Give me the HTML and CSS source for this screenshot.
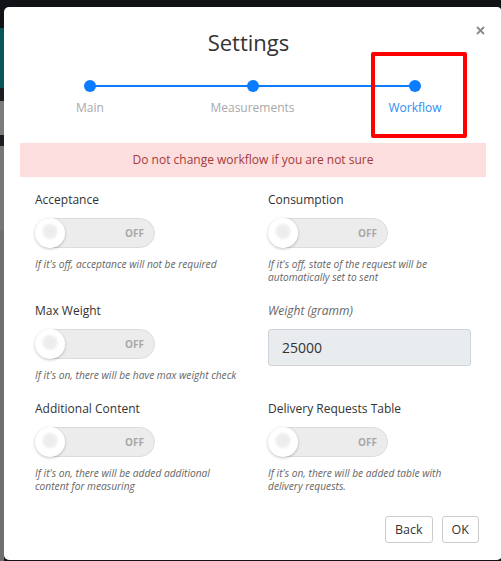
FILE: index.html
```html
<!DOCTYPE html>
<html>
<head>
<meta charset="utf-8">
<link rel="stylesheet" href="styles.css">
</head>
<body>
<div class="modal">
  <div class="close"><svg width="9" height="9" viewBox="0 0 9 9"><path d="M1 1L8 8M8 1L1 8" stroke="#8a8a8a" stroke-width="1.8"/></svg></div>
  <h1 class="title">Settings</h1>
  <div class="stepper">
    <div class="line"></div>
    <div class="step"><span class="dot"></span><span class="step-label">Main</span></div>
    <div class="step"><span class="dot"></span><span class="step-label">Measurements</span></div>
    <div class="step active"><span class="dot"></span><span class="step-label">Workflow</span></div>
    <div class="highlight"></div>
  </div>
  <div class="alert">Do not change workflow if you are not sure</div>
  <div class="form">
    <div class="group">
      <div class="label">Acceptance</div>
      <div class="toggle"><span class="knob"></span><span class="off">OFF</span></div>
      <div class="help">If it's off, acceptance will not be required</div>
    </div>
    <div class="group">
      <div class="label">Consumption</div>
      <div class="toggle"><span class="knob"></span><span class="off">OFF</span></div>
      <div class="help">If it's off, state of the request will be automatically set to sent</div>
    </div>
    <div class="group">
      <div class="label">Max Weight</div>
      <div class="toggle"><span class="knob"></span><span class="off">OFF</span></div>
      <div class="help">If it's on, there will be have max weight check</div>
    </div>
    <div class="group">
      <div class="label italic">Weight (gramm)</div>
      <div class="input">25000</div>
    </div>
    <div class="group">
      <div class="label">Additional Content</div>
      <div class="toggle"><span class="knob"></span><span class="off">OFF</span></div>
      <div class="help">If it's on, there will be added additional content for measuring</div>
    </div>
    <div class="group">
      <div class="label">Delivery Requests Table</div>
      <div class="toggle"><span class="knob"></span><span class="off">OFF</span></div>
      <div class="help">If it's on, there will be added table with delivery requests.</div>
    </div>
  </div>
  <div class="footer">
    <button class="btn">Back</button>
    <button class="btn">OK</button>
  </div>
</div>
</body>
</html>
```
FILE: styles.css
```css
html, body {
  margin: 0;
  padding: 0;
  height: 100%;
  overflow: hidden;
}
body {
  font-family: "Open Sans", "Liberation Sans", sans-serif;
  background-color: #111317;
  background-image: linear-gradient(to bottom,
    #111317 0, #111317 28px,
    #0a5557 28px, #0a5557 88px,
    #1c1e21 88px, #1c1e21 101px,
    #7c7c7c 101px, #7c7c7c 135px,
    #1c1e21 135px, #1c1e21 146px,
    #777777 146px, #777777 230px,
    #6f6f6f 230px, #6f6f6f 561px);
  background-size: 4px 100%;
  background-repeat: no-repeat;
  background-position: 0 0;
}
.modal {
  position: relative;
  margin: 7px 0 0 4px;
  width: 498px;
  height: 553px;
  background: #fff;
  border-radius: 5px;
  box-sizing: border-box;
  padding: 0 16px;
}
.close {
  position: absolute;
  left: 472px;
  top: 19px;
  line-height: 0;
}
.title {
  margin: 0 -16px;
  padding: 20px 9px 0 0;
  height: 32px;
  line-height: 30px;
  text-align: center;
  font-weight: 400;
  font-size: 22px;
  color: #333;
}
.stepper {
  position: relative;
  display: grid;
  grid-template-columns: 162px 163px 162px;
  margin: 0 0 0 -11px;
  padding-top: 21px;
  height: 84px;
  box-sizing: border-box;
}
.line {
  position: absolute;
  left: 81px;
  width: 325px;
  top: 26px;
  height: 2px;
  background: #0a7cff;
}
.step {
  display: flex;
  flex-direction: column;
  align-items: center;
  position: relative;
}
.dot {
  width: 12px;
  height: 12px;
  border-radius: 50%;
  background: #0a7cff;
  position: relative;
  z-index: 1;
}
.step-label {
  margin-top: 6px;
  font-size: 12px;
  line-height: 20px;
  color: #a9a9a9;
}
.step.active .step-label { color: #2f8ef4; }
.highlight {
  position: absolute;
  left: 362px;
  top: -7px;
  width: 96px;
  height: 86px;
  box-sizing: border-box;
  border: 4px solid #ff0000;
  border-radius: 2px;
}
.alert {
  height: 34px;
  line-height: 34px;
  background: #fddedf;
  color: #a33a3a;
  text-align: center;
  font-size: 12px;
}
.form {
  display: grid;
  grid-template-columns: 233px 233px;
  margin-top: 14px;
}
.group {
  padding: 0 15px;
  margin-bottom: 18px;
}
.label {
  font-size: 12px;
  line-height: 18px;
  color: #333;
  margin-bottom: 9px;
}
.label.italic {
  font-style: italic;
  color: #666;
}
.toggle {
  position: relative;
  width: 120px;
  height: 30px;
  box-sizing: border-box;
  border: 1px solid #dcdcdc;
  border-radius: 15px;
  background: #ececec;
}
.knob {
  position: absolute;
  left: -1px;
  top: -1px;
  width: 30px;
  height: 30px;
  border-radius: 50%;
  background: radial-gradient(circle at 50% 45%, #ebebeb 0, #efefef 6px, #ffffff 9px);
  box-shadow: 0 1px 3px rgba(0,0,0,0.25);
}
.off {
  position: absolute;
  right: 10px;
  top: 0;
  line-height: 28px;
  font-size: 10px;
  font-weight: 700;
  color: #a8a8a8;
}
.help {
  margin-top: 10px;
  font-size: 10.2px;
  line-height: 13px;
  font-style: italic;
  color: #666;
}
.input {
  height: 37px;
  box-sizing: border-box;
  border: 1px solid #cfd3d7;
  border-radius: 3px;
  background: #e9ecef;
  padding-left: 13px;
  line-height: 35px;
  font-size: 14px;
  color: #333;
}
.footer {
  position: absolute;
  right: 23px;
  top: 509px;
  display: flex;
  gap: 9px;
}
.btn {
  height: 27px;
  padding: 0 9px;
  background: #fff;
  border: 1px solid #cccccc;
  border-radius: 3px;
  font-family: "Open Sans", "Liberation Sans", sans-serif;
  font-size: 12.5px;
  color: #333;
}
```
